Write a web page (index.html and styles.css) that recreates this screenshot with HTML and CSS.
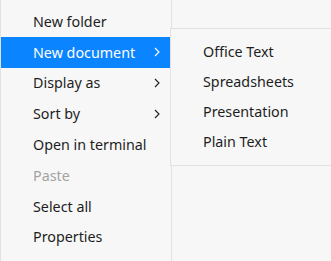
FILE: index.html
```html
<!DOCTYPE html>
<html lang="en">
<head>
    <meta charset="UTF-8">
    <title>Context menu</title>
    <link rel="stylesheet" href="styles.css">
</head>
<body>
    <div class="menu">
        <div class="item">New folder</div>
        <div class="item active">New document
            <svg class="arrow" width="6" height="10" viewBox="0 0 6 10"><path d="M1 1 L5 5 L1 9" fill="none" stroke="currentColor" stroke-width="1.1"/></svg>
        </div>
        <div class="item">Display as
            <svg class="arrow" width="6" height="10" viewBox="0 0 6 10"><path d="M1 1 L5 5 L1 9" fill="none" stroke="currentColor" stroke-width="1.1"/></svg>
        </div>
        <div class="item">Sort by
            <svg class="arrow" width="6" height="10" viewBox="0 0 6 10"><path d="M1 1 L5 5 L1 9" fill="none" stroke="currentColor" stroke-width="1.1"/></svg>
        </div>
        <div class="item">Open in terminal</div>
        <div class="item disabled">Paste</div>
        <div class="item">Select all</div>
        <div class="item">Properties</div>
    </div>

    <div class="submenu">
        <div class="item">Office Text</div>
        <div class="item">Spreadsheets</div>
        <div class="item">Presentation</div>
        <div class="item">Plain Text</div>
    </div>
</body>
</html>
```

FILE: styles.css
```css
body {
    margin: 0;
    height: 261px;
    overflow: hidden;
    background-color: #f7f7f7;
    font-family: "Noto Sans", sans-serif;
    font-size: 14.3px;
    color: #1e1e1e;
    position: relative;
}

.menu {
    box-sizing: border-box;
    width: 172px;
    height: 100%;
    overflow: hidden;
    padding-top: 6px;
    border-left: 1px solid #e2e2e2;
    border-right: 1px solid #e2e2e2;
    background-color: #f7f7f7;
}

.item {
    display: flex;
    align-items: center;
    justify-content: space-between;
    height: 30.8px;
    padding: 0 11px 0 32px;
    white-space: nowrap;
}

.menu .item.active {
    background-color: #0a84ff;
    color: #ffffff;
}

.item.disabled {
    color: #a3a3a3;
}

.arrow {
    display: block;
}

.submenu {
    position: absolute;
    left: 170px;
    right: 0;
    top: 28px;
    padding: 7.5px 0 8.5px;
    border: 1px solid #e2e2e2;
    border-right: none;
    background-color: #f7f7f7;
}

.submenu .item {
    height: 30px;
}
```
